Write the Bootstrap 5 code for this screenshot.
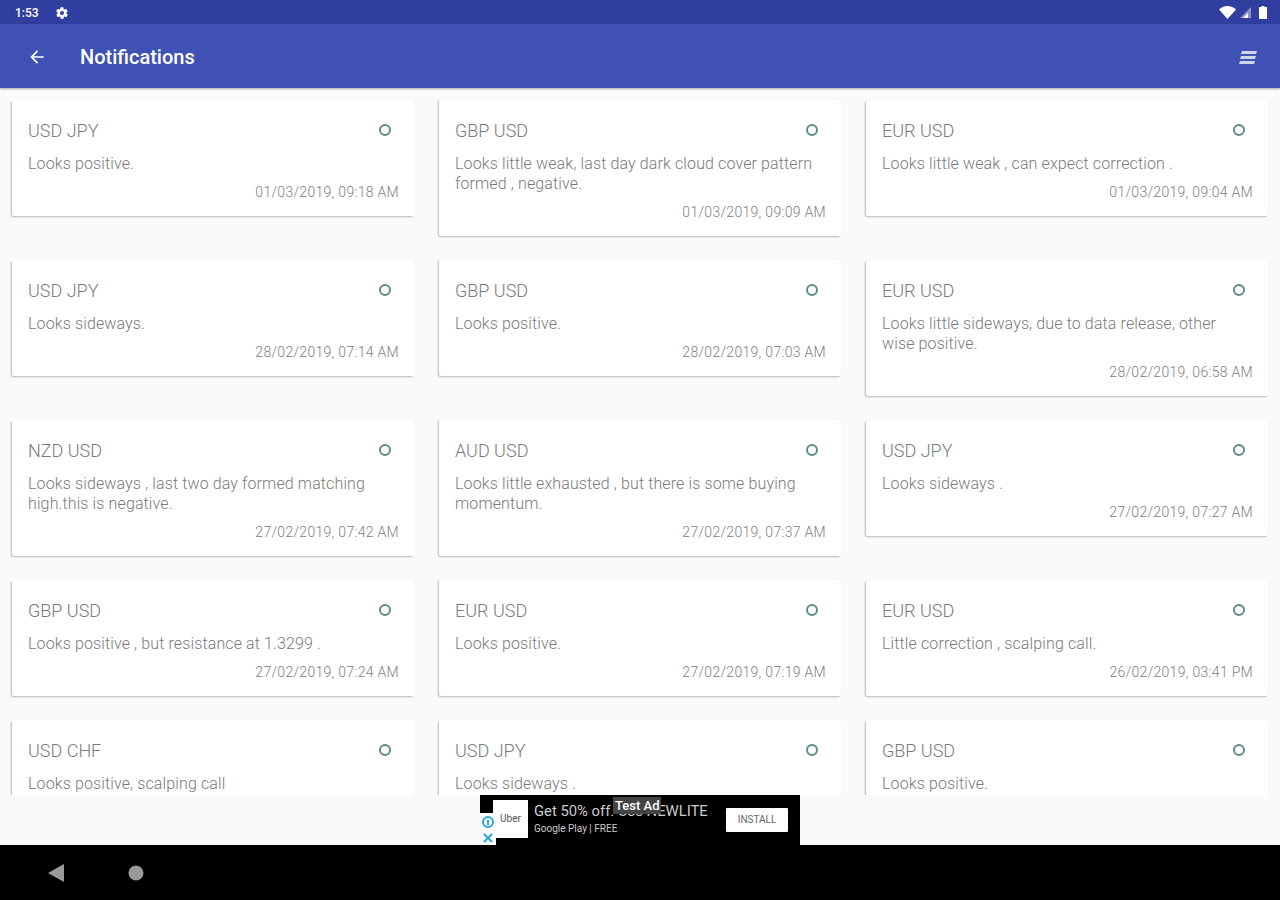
<!DOCTYPE html>
<html lang="en">
<head>
    <meta charset="UTF-8">
    <title>Notifications</title>
    <link rel="stylesheet" href="https://cdn.jsdelivr.net/npm/bootstrap@5.3.0/dist/css/bootstrap.min.css">
    <style>
        html, body { height: 900px; overflow: hidden; }
        body { font-family: Roboto, "Liberation Sans", sans-serif; background: #fafafa; }
        .screen { width: 1280px; height: 900px; }
        .status-strip { height: 24px; background: #303f9f; color: #fff; font-size: 12px; font-weight: 500; padding: 1px 13px 0 15px; flex: none; }
        .status-gear { margin-left: 13px; }
        .status-icons { margin-left: auto; }
        .app-toolbar { height: 64px; background: #3f51b5; color: #fff; padding: 2px 23px 0 27px; flex: none; box-shadow: 0 1px 2px rgba(0,0,0,.35); position: relative; }
        .app-toolbar h1 { font-size: 20px; font-weight: 500; margin: 0 0 0 33px; line-height: 1; }
        .list-area { height: 707px; overflow: hidden; flex: none; padding: 12px 12px 0; }
        .notify-grid { display: grid; grid-template-columns: repeat(3, 402px); column-gap: 25px; row-gap: 24px; align-items: start; }
        .notify-card { background: #fff; border: 0; border-radius: 2px; box-shadow: -1px 1px 2px rgba(0,0,0,.28); padding: 20px 15px 15px 16px; color: #7a7a7a; }
        .notify-title { font-size: 18px; font-weight: 300; line-height: 22px; margin: 0; padding-right: 6px; }
        .notify-dot { width: 12px; height: 12px; border: 2px solid #5f8a8b; border-radius: 50%; margin: 4px 8px 0 0; flex: none; }
        .notify-text { font-size: 16px; font-weight: 300; line-height: 20px; letter-spacing: .12px; margin: 12px 4px 0 0; }
        .notify-time { font-size: 14px; font-weight: 300; line-height: 18px; letter-spacing: .3px; text-align: right; margin: 9px 0 0; color: #808080; }
        .ad-row { height: 50px; flex: none; }
        .ad-box { width: 320px; height: 50px; background: #000; color: #ccc; position: relative; }
        .ad-logo { width: 35px; height: 38px; background: #fff; color: #555; font-size: 10px; margin: 5px 0 0 13px; flex: none; line-height: 38px; text-align: center; }
        .ad-copy { margin: 6px 0 0 6px; font-size: 14.8px; line-height: 20px; white-space: nowrap; }
        .ad-copy small { display: block; font-size: 10px; line-height: 14px; margin-top: 1px; }
        .ad-install { position: absolute; left: 246px; top: 13px; width: 62px; height: 24px; background: #fff; color: #666; font-size: 10px; line-height: 24px; text-align: center; border-radius: 1px; }
        .ad-flag { position: absolute; left: 133px; top: 2px; background: #444; color: #fff; font-size: 13px; font-weight: 500; line-height: 17px; padding: 0 2px; }
        .ad-choice { position: absolute; left: 0; top: 18px; width: 16px; height: 32px; background: #fff; }
        .nav-strip { height: 55px; background: #000; flex: none; padding: 0 0 0 48px; gap: 64px; }
    </style>
</head>
<body>
    <div class="screen d-flex flex-column">
        <div class="status-strip d-flex align-items-center">
            <span>1:53</span>
            <svg class="status-gear ms-3" width="14" height="14" viewBox="0 0 24 24" fill="#fff"><path d="M19.400 13c.1-.3.1-.7.1-1s0-.7-.1-1l2.100-1.600c.2-.2.2-.4.1-.6l-2-3.500c-.1-.2-.4-.3-.6-.2l-2.500 1c-.5-.4-1.100-.7-1.700-1l-.4-2.600c0-.3-.2-.5-.5-.5h-4c-.3 0-.5.2-.5.400l-.4 2.700c-.6.2-1.200.6-1.700 1l-2.500-1c-.2-.1-.5 0-.6.2l-2 3.500c-.1.2-.1.4.1.6L4.600 11c-.1.300-.1.700-.1 1s0 .7.1 1l-2.100 1.600c-.2.200-.2.400-.1.600l2 3.500c.1.200.4.300.6.200l2.500-1c.5.400 1.100.700 1.700 1l.4 2.600c0 .3.2.5.5.5h4c.3 0 .5-.2.5-.4l.4-2.700c.6-.2 1.200-.6 1.700-1l2.500 1c.2.100.5 0 .6-.2l2-3.500c.1-.2.1-.4-.1-.6zM12 15.500a3.500 3.500 0 1 1 0-7 3.500 3.500 0 0 1 0 7z"/></svg>
            <span class="status-icons d-flex align-items-center gap-1">
                <svg width="17" height="13" viewBox="0 0 17 13" fill="#fff"><path d="M0 3.500C2.200 1.300 5.200 0 8.500 0S14.800 1.300 17 3.500L8.500 13z"/></svg>
                <svg width="11" height="11" viewBox="0 0 11 11"><path d="M0 11 11 0v11z" fill="#fff" opacity=".45"/><path d="M3 11 8 6v5z" fill="#fff"/></svg>
                <svg class="ms-1" width="8" height="13" viewBox="0 0 8 13"><path d="M2.500 0h3v1H8v12H0V1h2.500z" fill="#fff"/></svg>
            </span>
        </div>
        <div class="app-toolbar d-flex align-items-center">
            <svg width="20" height="20" viewBox="0 0 24 24" fill="#fff"><path d="M20 11H7.800l5.600-5.600L12 4l-8 8 8 8 1.400-1.400L7.800 13H20z"/></svg>
            <h1>Notifications</h1>
            <svg class="ms-auto" width="18" height="13" viewBox="0 0 18 13" fill="#cfd4ee"><path d="M3 0h15l-1 3H2zM2 5h15l-1 3H1zM1 10h15l-1 3H0z"/></svg>
        </div>
        <div class="list-area">
            <div class="notify-grid" id="grid"></div>
        </div>
        <div class="ad-row d-flex justify-content-center">
            <div class="ad-box d-flex">
                <div class="ad-logo">Uber</div>
                <div class="ad-copy">Get 50% off. Use NEWLITE<small>Google Play | FREE</small></div>
                <div class="ad-flag">Test Ad</div>
                <div class="ad-install">INSTALL</div>
                <div class="ad-choice">
                    <svg class="d-block" width="16" height="32" viewBox="0 0 16 32" fill="none" stroke="#29a8d8" stroke-width="2"><circle cx="8" cy="9" r="5"/><path d="M8 7v5"/><path d="M4 21l8 8M12 21l-8 8"/></svg>
                </div>
            </div>
        </div>
        <div class="nav-strip d-flex align-items-center">
            <svg width="16" height="18" viewBox="0 0 16 18" fill="#999"><path d="M16 0v18L0 9z"/></svg>
            <svg width="16" height="16" viewBox="0 0 16 16" fill="#999"><circle cx="8" cy="8" r="7.500"/></svg>
        </div>
    </div>

    <script src="https://cdn.jsdelivr.net/npm/bootstrap@5.3.0/dist/js/bootstrap.bundle.min.js"></script>
    <script>
        // last row is cut off by the ad, its dates are never seen
        const notifications = [
            ['USD JPY', 'Looks positive.', '01/03/2019, 09:18 AM'],
            ['GBP USD', 'Looks little weak, last day dark cloud cover pattern formed , negative.', '01/03/2019, 09:09 AM'],
            ['EUR USD', 'Looks little weak , can expect correction .', '01/03/2019, 09:04 AM'],
            ['USD JPY', 'Looks sideways.', '28/02/2019, 07:14 AM'],
            ['GBP USD', 'Looks positive.', '28/02/2019, 07:03 AM'],
            ['EUR USD', 'Looks little sideways, due to data release, other wise positive.', '28/02/2019, 06:58 AM'],
            ['NZD USD', 'Looks sideways , last two day formed matching high.this is negative.', '27/02/2019, 07:42 AM'],
            ['AUD USD', 'Looks little exhausted , but there is some buying momentum.', '27/02/2019, 07:37 AM'],
            ['USD JPY', 'Looks sideways .', '27/02/2019, 07:27 AM'],
            ['GBP USD', 'Looks positive , but resistance at 1.3299 .', '27/02/2019, 07:24 AM'],
            ['EUR USD', 'Looks positive.', '27/02/2019, 07:19 AM'],
            ['EUR USD', 'Little correction , scalping call.', '26/02/2019, 03:41 PM'],
            ['USD CHF', 'Looks positive, scalping call'],
            ['USD JPY', 'Looks sideways .'],
            ['GBP USD', 'Looks positive.']
        ];
        const grid = document.getElementById('grid');
        notifications.forEach(item => {
            const card = document.createElement('div');
            card.className = 'card notify-card';
            card.innerHTML = `
                <div class="d-flex justify-content-between align-items-start">
                    <p class="notify-title">${item[0]}</p>
                    <span class="notify-dot"></span>
                </div>
                <p class="notify-text">${item[1]}</p>
                ${item[2] ? `<p class="notify-time">${item[2]}</p>` : ''}
            `;
            grid.appendChild(card);
        });
    </script>
</body>
</html>
